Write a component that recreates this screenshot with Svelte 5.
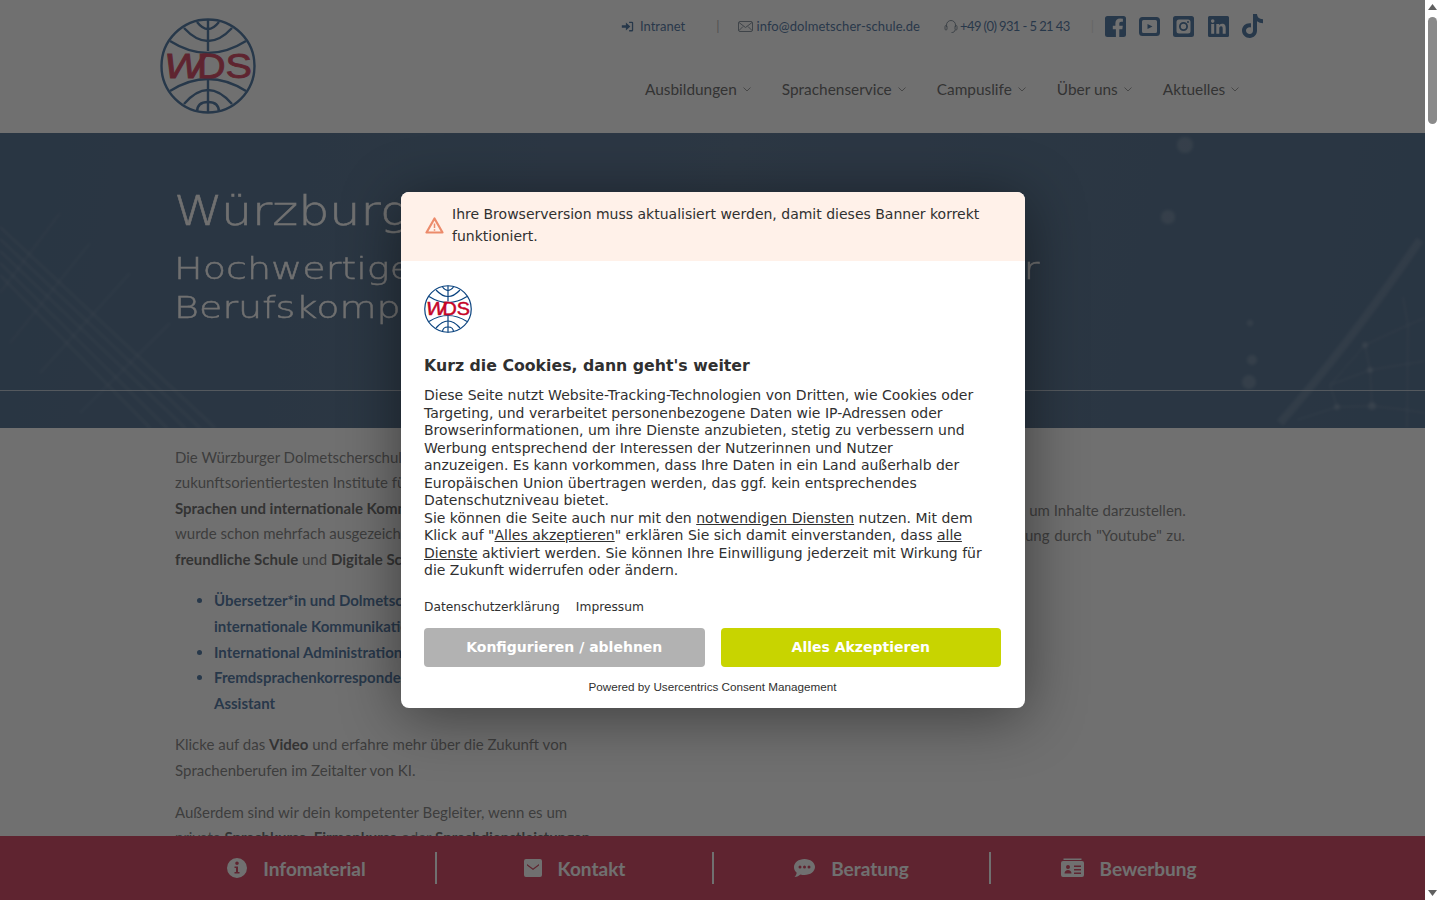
<script>
    const topLinks = [
        { label: 'Ausbildungen' },
        { label: 'Sprachenservice' },
        { label: 'Campuslife' },
        { label: 'Über uns' },
        { label: 'Aktuelles' }
    ];
</script>

{#snippet logo(cls)}
    <svg class={cls} viewBox="0 0 96 96" aria-label="WDS">
        <g fill="none" stroke="var(--globe)" stroke-width="2.4">
            <circle cx="48" cy="48" r="46.5" />
            <path d="M37 4q11 14 22 0M24 10q24 26 48 0M10 23q38 24 76 0" />
            <path d="M10 73q38-24 76 0M24 86q24-28 48 0M37 94q0-10 11-10t11 10" />
            <path d="M48 1.5V33M48 62v33" />
        </g>
        <text class="wds slant" x="4" y="60" textLength="40" lengthAdjust="spacingAndGlyphs">W</text>
        <text class="wds" x="37" y="60" textLength="55" lengthAdjust="spacingAndGlyphs">DS</text>
    </svg>
{/snippet}

<div class="page">
    <div class="site">
        <header>
            {@render logo('logo')}
            <div class="head-right">
                <div class="meta">
                    <span class="meta-item intranet">
                        <svg width="13" height="13" viewBox="0 0 16 16"><path d="M1 6.500h5V3l5.500 5L6 13V9.500H1zM10 2h3.500A1.500 1.500 0 0 1 15 3.500v9a1.500 1.500 0 0 1-1.500 1.500H10v-1.600h3.400V3.600H10z" fill="#0a437f"/></svg>
                        Intranet
                    </span>
                    <span class="sep">|</span>
                    <span class="meta-item mail">
                        <svg width="15" height="11" viewBox="0 0 15 11" fill="none" stroke="#5a6b7c"><rect x=".5" y=".5" width="14" height="10" rx="1.500"/><path d="M1 1.500l6.500 5 6.500-5M1 9.500l4-4M14 9.500l-4-4"/></svg>
                        info@dolmetscher-schule.de
                    </span>
                    <span class="meta-item phone">
                        <svg width="14" height="15" viewBox="0 0 14 15" fill="none" stroke="#5a6b7c"><path d="M2.500 8V6a4.500 4.500 0 0 1 9 0v2M11 11c0 1.800-1.500 2.500-3.500 2.500"/><rect x="1" y="6.500" width="2" height="4.500" rx="1"/><rect x="11" y="6.500" width="2" height="4.500" rx="1"/></svg>
                        +49 (0) 931 - 5 21 43
                    </span>
                    <span class="sep faint">|</span>
                    <div class="social">
                        <svg viewBox="0 0 21 21"><path d="M2.500 0h16A2.500 2.500 0 0 1 21 2.500v16a2.500 2.500 0 0 1-2.500 2.500h-4.200v-7.800h3l.5-3.500h-3.500V7.600c0-1 .5-1.900 2-1.900h1.600v-3a19 19 0 0 0-2.800-.2c-2.900 0-4.700 1.700-4.700 4.800v2.400H7.800v3.500h3.100V21H2.500A2.500 2.500 0 0 1 0 18.500v-16A2.500 2.500 0 0 1 2.500 0z"/></svg>
                        <svg viewBox="0 0 21 21"><path fill-rule="evenodd" d="M3.500 1h14A3.500 3.500 0 0 1 21 4.500v12a3.500 3.500 0 0 1-3.500 3.500h-14A3.500 3.500 0 0 1 0 16.500v-12A3.500 3.500 0 0 1 3.500 1zM4.500 4A1.500 1.500 0 0 0 3 5.500v10A1.500 1.500 0 0 0 4.500 17h12a1.500 1.500 0 0 0 1.500-1.500v-10A1.500 1.500 0 0 0 16.500 4zM8.500 8l5 2.500-5 2.500z"/></svg>
                        <svg viewBox="0 0 21 21"><path fill-rule="evenodd" d="M2.500 0h16A2.500 2.500 0 0 1 21 2.500v16a2.500 2.500 0 0 1-2.500 2.500h-16A2.500 2.500 0 0 1 0 18.500v-16A2.500 2.500 0 0 1 2.500 0zM6 3.500A2.500 2.500 0 0 0 3.500 6v9A2.500 2.500 0 0 0 6 17.500h9a2.500 2.500 0 0 0 2.500-2.500V6A2.500 2.500 0 0 0 15 3.500zM10.500 6a4.500 4.500 0 1 1 0 9 4.500 4.500 0 0 1 0-9zm0 1.800a2.700 2.700 0 1 0 0 5.400 2.700 2.700 0 0 0 0-5.400zM15 5a1 1 0 1 1 0 2 1 1 0 0 1 0-2z"/></svg>
                        <svg viewBox="0 0 21 21"><path fill-rule="evenodd" d="M1.500 0h18A1.500 1.500 0 0 1 21 1.500v18a1.500 1.500 0 0 1-1.500 1.500h-18A1.500 1.500 0 0 1 0 19.500v-18A1.500 1.500 0 0 1 1.500 0zM3.200 8v9.800h3V8zm1.500-4.700a1.800 1.800 0 1 0 0 3.600 1.800 1.800 0 0 0 0-3.600zM8.300 8v9.800h3v-5c0-1.300.3-2.500 1.800-2.500s1.600 1.400 1.600 2.600v4.900h3v-5.400c0-2.700-.6-4.700-3.700-4.700-1.500 0-2.500.8-2.900 1.600V8z"/></svg>
                        <svg viewBox="0 0 21 24"><path d="M11 0h4c.2 3 2 5 6 5.300v4c-2.300 0-4.300-.7-6-2v9.300C15 21 11.800 24 7.800 24 3.500 24 0 20.800 0 16.500 0 11.800 4 8.500 9 9.300v4.200c-2.500-.7-5 .8-5 3.100 0 2 1.700 3.500 3.700 3.500 2 0 3.300-1.400 3.300-3.500z"/></svg>
                    </div>
                </div>
                <nav>
                    {#each topLinks as link}
                        <a href="#top">
                            {link.label}
                            <svg width="8" height="5" viewBox="0 0 8 5" fill="none" stroke="#777"><path d="M.5.5l3.500 3.500 3.500-3.500"/></svg>
                        </a>
                    {/each}
                </nav>
            </div>
        </header>

        <section class="hero">
            <svg class="hero-bg" viewBox="0 0 1425 295" preserveAspectRatio="none">
                <g stroke="#fff" fill="none" stroke-opacity=".16">
                    <path d="M0 130L167 295M0 118L185 295M0 106L200 295M0 94L215 295M0 142L150 295" stroke-width="1.500" />
                    <path d="M0 160L60 80M10 210L90 110M40 240L130 140M80 280L170 190" stroke-opacity=".08" stroke-width="2" />
                    <path d="M1280 290Q1350 210 1420 107" stroke-width="8" stroke-opacity=".12" />
                    <path d="M1330 252L1365 212L1408 192L1425 185M1330 252L1370 237L1425 228M1365 212L1370 237L1372 273M1330 252L1337 274M1297 287L1337 274L1372 273L1407 277L1425 280M1403 164L1408 192L1407 295" />
                </g>
                <g fill="#fff" fill-opacity=".16">
                    <circle cx="1185" cy="12" r="8" /><circle cx="1168" cy="84" r="7" /><circle cx="1250" cy="190" r="3" /><circle cx="1252" cy="227" r="5" />
                    <circle cx="1249" cy="249" r="7" /><circle cx="1365" cy="212" r="3" /><circle cx="1370" cy="237" r="3" /><circle cx="1372" cy="273" r="4" /><circle cx="1337" cy="274" r="3" />
                </g>
            </svg>
            <div class="hero-text">
                <h1>Würzburger Dolmetscherschule</h1>
                <h2>Hochwertige Ausbildung in Sprachen mit mehr<br />Berufskompetenz</h2>
            </div>
            <div class="hero-line"></div>
        </section>

        <main>
            <div class="col left">
                <p>
                    Die Würzburger Dolmetscherschule ist eines der<br />
                    zukunftsorientiertesten Institute für<br />
                    <b>Sprachen und internationale Kommunikation</b> und<br />
                    wurde schon mehrfach ausgezeichnet, u.a. als<br />
                    <b>freundliche Schule</b> und <b>Digitale Schule</b>.
                </p>
                <ul>
                    <li>Übersetzer*in und Dolmetscher*in für<br />internationale Kommunikation</li>
                    <li>International Administration</li>
                    <li>Fremdsprachenkorrespondent*in und<br />Assistant</li>
                </ul>
                <p>
                    Klicke auf das <b>Video</b> und erfahre mehr über die Zukunft von<br />
                    Sprachenberufen im Zeitalter von KI.
                </p>
                <p>
                    Außerdem sind wir dein kompetenter Begleiter, wenn es um<br />
                    private <b>Sprachkurse</b>, <b>Firmenkurse</b> oder <b>Sprachdienstleistungen</b>
                </p>
            </div>
            <div class="col right">
                <p>Wir nutzen Dienste von Drittanbietern, um Inhalte darzustellen.<br /><span class="yt">Bitte stimme daher der Datenverarbeitung durch "Youtube" zu.</span></p>
            </div>
        </main>

        <footer>
            <div class="cta">
                <svg width="20" height="20" viewBox="0 0 20 20"><path fill-rule="evenodd" d="M10 0a10 10 0 1 1 0 20 10 10 0 0 1 0-20zM10 3.500a1.800 1.800 0 1 0 0 3.600 1.800 1.800 0 0 0 0-3.600zM7.500 8.500V10H9v4H7.500v1.500h5V14H11V8.500z"/></svg>
                Infomaterial
            </div>
            <div class="cta">
                <svg width="18" height="20" viewBox="0 0 18 20"><path fill-rule="evenodd" d="M2 1h14a2 2 0 0 1 2 2v14a2 2 0 0 1-2 2H2a2 2 0 0 1-2-2V3a2 2 0 0 1 2-2zM3 6v1.500l6 4.500 6-4.500V6l-6 4.500z"/></svg>
                Kontakt
            </div>
            <div class="cta">
                <svg width="21" height="20" viewBox="0 0 21 20"><path fill-rule="evenodd" d="M10.500 1C16.300 1 21 4.600 21 9s-4.700 8-10.500 8c-1.400 0-2.800-.2-4-.6C5 17.500 3 19 .5 19c1-1 2-2.600 2.200-4.300C1 13.300 0 11.300 0 9c0-4.400 4.700-8 10.500-8zM6 7.500a1.500 1.500 0 1 0 0 3 1.500 1.500 0 0 0 0-3zm4.500 0a1.500 1.500 0 1 0 0 3 1.500 1.500 0 0 0 0-3zm4.500 0a1.500 1.500 0 1 0 0 3 1.500 1.500 0 0 0 0-3z"/></svg>
                Beratung
            </div>
            <div class="cta">
                <svg width="23" height="20" viewBox="0 0 23 20"><path fill-rule="evenodd" d="M2 3h19a2 2 0 0 1 2 2v12a2 2 0 0 1-2 2H2a2 2 0 0 1-2-2V5a2 2 0 0 1 2-2zM2.500.5h18V2h-18zM7 7a2 2 0 1 0 0 4 2 2 0 0 0 0-4zM3.500 15.500h7c0-2-1.500-3.500-3.500-3.500s-3.500 1.500-3.500 3.500zM13 7.500v1.500h7V7.500zm0 3.500v1.500h7V11zm0 3.500V16h7v-1.500z"/></svg>
                Bewerbung
            </div>
        </footer>

        <div class="overlay"></div>

        <div class="modal" role="dialog">
            <div class="warn">
                <svg width="19" height="17" viewBox="0 0 19 17" fill="none" stroke="#ec8b6b" stroke-width="2.200"><path d="M9.500 1.500L1.500 15.500h16z" stroke-linejoin="round"/><path d="M9.500 6.500v4.500M9.500 12.200v1.600" stroke-width="1.500"/></svg>
                <span>Ihre Browserversion muss aktualisiert werden, damit dieses Banner korrekt funktioniert.</span>
            </div>
            <div class="modal-body">
                {@render logo('modal-logo')}
                <h3>Kurz die Cookies, dann geht's weiter</h3>
                <p class="message">Diese Seite nutzt Website-Tracking-Technologien von Dritten, wie Cookies oder Targeting, und verarbeitet personenbezogene Daten wie IP-Adressen oder Browserinformationen, um ihre Dienste anzubieten, stetig zu verbessern und Werbung entsprechend der Interessen der Nutzerinnen und Nutzer<br />anzuzeigen. Es kann vorkommen, dass Ihre Daten in ein Land außerhalb der Europäischen Union übertragen werden, das ggf. kein entsprechendes Datenschutzniveau bietet.<br />Sie können die Seite auch nur mit den <u>notwendigen Diensten</u> nutzen. Mit dem Klick auf "<u>Alles akzeptieren</u>" erklären Sie sich damit einverstanden, dass <u>alle Dienste</u> aktiviert werden. Sie können Ihre Einwilligung jederzeit mit Wirkung für die Zukunft widerrufen oder ändern.</p>
                <div class="legal"><span>Datenschutzerklärung</span><span>Impressum</span></div>
                <div class="buttons">
                    <button class="deny">Konfigurieren / ablehnen</button>
                    <button class="accept">Alles Akzeptieren</button>
                </div>
                <div class="powered">Powered by Usercentrics Consent Management</div>
            </div>
        </div>
    </div>

    <div class="scrollbar">
        <svg width="9" height="6" viewBox="0 0 9 6"><path d="M4.500 0l4.500 6H0z" fill="#606060"/></svg>
        <div class="thumb"></div>
        <div class="track"></div>
        <svg width="9" height="6" viewBox="0 0 9 6"><path d="M4.500 6l4.500-6H0z" fill="#606060"/></svg>
    </div>
</div>

<style>
    :global(body) {
        margin: 0;
        overflow: hidden;
        background: #fff;
    }

    .page {
        --globe: #0a437f;
        display: flex;
        height: 900px;
        font-family: Lato, "Noto Sans", sans-serif;
        font-size: 15px;
        color: #555;
    }

    .site {
        position: relative;
        flex: 1;
        min-width: 0;
        display: flex;
        flex-direction: column;
        overflow: hidden;
    }

    header {
        flex: none;
        height: 133px;
        box-sizing: border-box;
        padding: 14px 0 0 160px;
        display: flex;
        background: #fff;
    }

    .logo {
        width: 96px;
        height: 96px;
        margin-top: 4px;
    }

    .wds {
        font-family: "Liberation Sans", sans-serif;
        font-size: 35px;
        fill: #c50328;
        stroke: #c50328;
        stroke-width: .9px;
    }

    .slant {
        font-style: italic;
    }

    .head-right {
        margin-left: 365px;
        width: 650px;
    }

    .meta {
        display: flex;
        align-items: center;
        height: 24px;
        font-size: 13px;
        color: #0a437f;
    }

    .meta-item {
        display: flex;
        align-items: center;
        gap: 4px;
        white-space: nowrap;
    }

    .intranet {
        gap: 6px;
    }

    .mail {
        gap: 3px;
        letter-spacing: .08px;
    }

    .sep {
        margin: 0 19px 0 31px;
        color: #999;
    }

    .sep.faint {
        margin: 0 11px 0 21px;
        color: #ddd;
    }

    .phone {
        margin-left: 24px;
        gap: 2px;
        letter-spacing: -.6px;
    }

    .social {
        display: flex;
        gap: 13.250px;
        align-items: center;
    }

    .social svg {
        width: 21px;
        height: 21px;
        fill: #0a437f;
    }

    .social svg:last-child {
        height: 24px;
    }

    nav {
        display: flex;
        gap: 31px;
        margin: 42px 0 0 24px;
        font-size: 15.400px;
    }

    nav a {
        color: #333;
        text-decoration: none;
        display: flex;
        align-items: center;
        gap: 6px;
    }

    .hero {
        position: relative;
        flex: none;
        height: 295px;
        background: linear-gradient(100deg, #123c68, #1e436c 50%, #123c68);
        color: #fff;
    }

    .hero-bg {
        position: absolute;
        inset: 0;
        width: 100%;
        height: 100%;
        filter: blur(1.500px);
    }

    .hero-text {
        position: relative;
        padding: 51px 0 0 174px;
    }

    h1, h2 {
        margin: 0;
        font-family: "DejaVu Sans", sans-serif;
        font-weight: 200;
        white-space: nowrap;
        transform-origin: left;
    }

    h1 {
        font-size: 40px;
        line-height: 54px;
        transform: scaleX(1.230);
        -webkit-text-stroke: .5px #fff;
    }

    h2 {
        font-size: 30px;
        line-height: 39px;
        margin-top: 11px;
        word-spacing: -3.600px;
        transform: scaleX(1.270);
        -webkit-text-stroke: .4px #fff;
    }

    .hero-line {
        position: absolute;
        left: 0;
        right: 0;
        top: 257px;
        height: 1px;
        background: rgba(255, 255, 255, .6);
    }

    main {
        flex: 1;
        min-height: 0;
        overflow: hidden;
        display: flex;
        padding: 16.500px 0 0 175px;
        line-height: 25.600px;
    }

    .left {
        width: 480px;
        flex: none;
    }

    .right {
        padding: 53px 0 0 114px;
    }

    .yt {
        word-spacing: .8px;
    }

    .col p {
        margin: 0 0 16px;
        white-space: nowrap;
    }

    ul {
        margin: 0 0 16px;
        padding-left: 39px;
        font-weight: 700;
        color: #0a437f;
        white-space: nowrap;
    }

    b {
        color: #333;
    }

    footer {
        flex: none;
        height: 64px;
        box-sizing: border-box;
        padding: 16px 158px;
        display: grid;
        grid-template-columns: repeat(4, 277px);
        background: #c50328;
        color: #fff;
        font-size: 19px;
        font-weight: 700;
    }

    .cta {
        display: flex;
        align-items: center;
        justify-content: center;
        gap: 16px;
        border-left: 2px solid #fff;
    }

    .cta:first-child {
        border-left: 0;
    }

    .cta svg {
        fill: #fff;
    }

    .overlay {
        position: absolute;
        inset: 0;
        background: rgba(51, 51, 51, .7);
    }

    .modal {
        position: absolute;
        left: 401px;
        top: 192px;
        width: 624px;
        border-radius: 8px;
        background: #fff;
        overflow: hidden;
        box-shadow: 0 8px 60px rgba(0, 0, 0, .45);
        font-family: "DejaVu Sans", Verdana, sans-serif;
        font-size: 14px;
        color: #303030;
    }

    .warn {
        display: flex;
        align-items: center;
        gap: 8px;
        padding: 11px 24px 14px;
        background: #fff1e9;
        line-height: 22px;
    }

    .warn svg {
        flex: none;
    }

    .modal-body {
        padding: 24px 24px 14px 23px;
    }

    .modal-logo {
        display: block;
        width: 48px;
        height: 48px;
    }

    h3 {
        margin: 23px 0 0;
        font-size: 15.750px;
        line-height: 20px;
    }

    .message {
        margin: 11px 0 0;
        line-height: 17.500px;
    }

    .legal {
        display: flex;
        gap: 16px;
        margin-top: 19px;
        font-size: 12.250px;
        line-height: 16px;
    }

    .buttons {
        display: flex;
        gap: 16px;
        margin-top: 13px;
    }

    button {
        flex: 1;
        height: 39px;
        border: 0;
        border-radius: 4px;
        color: #fff;
        font: 700 14px "DejaVu Sans", Verdana, sans-serif;
    }

    .deny {
        background: #b2b2b2;
    }

    .accept {
        background: #c8d400;
    }

    .powered {
        margin-top: 13px;
        text-align: center;
        font: 11.700px/14px "Liberation Sans", sans-serif;
    }

    .scrollbar {
        flex: none;
        width: 15px;
        display: flex;
        flex-direction: column;
        align-items: center;
        background: #fff;
        padding: 4px 0;
        box-sizing: border-box;
    }

    .thumb {
        width: 9px;
        height: 107px;
        margin-top: 7px;
        border-radius: 5px;
        background: #8a8a8a;
    }

    .track {
        flex: 1;
    }
</style>
